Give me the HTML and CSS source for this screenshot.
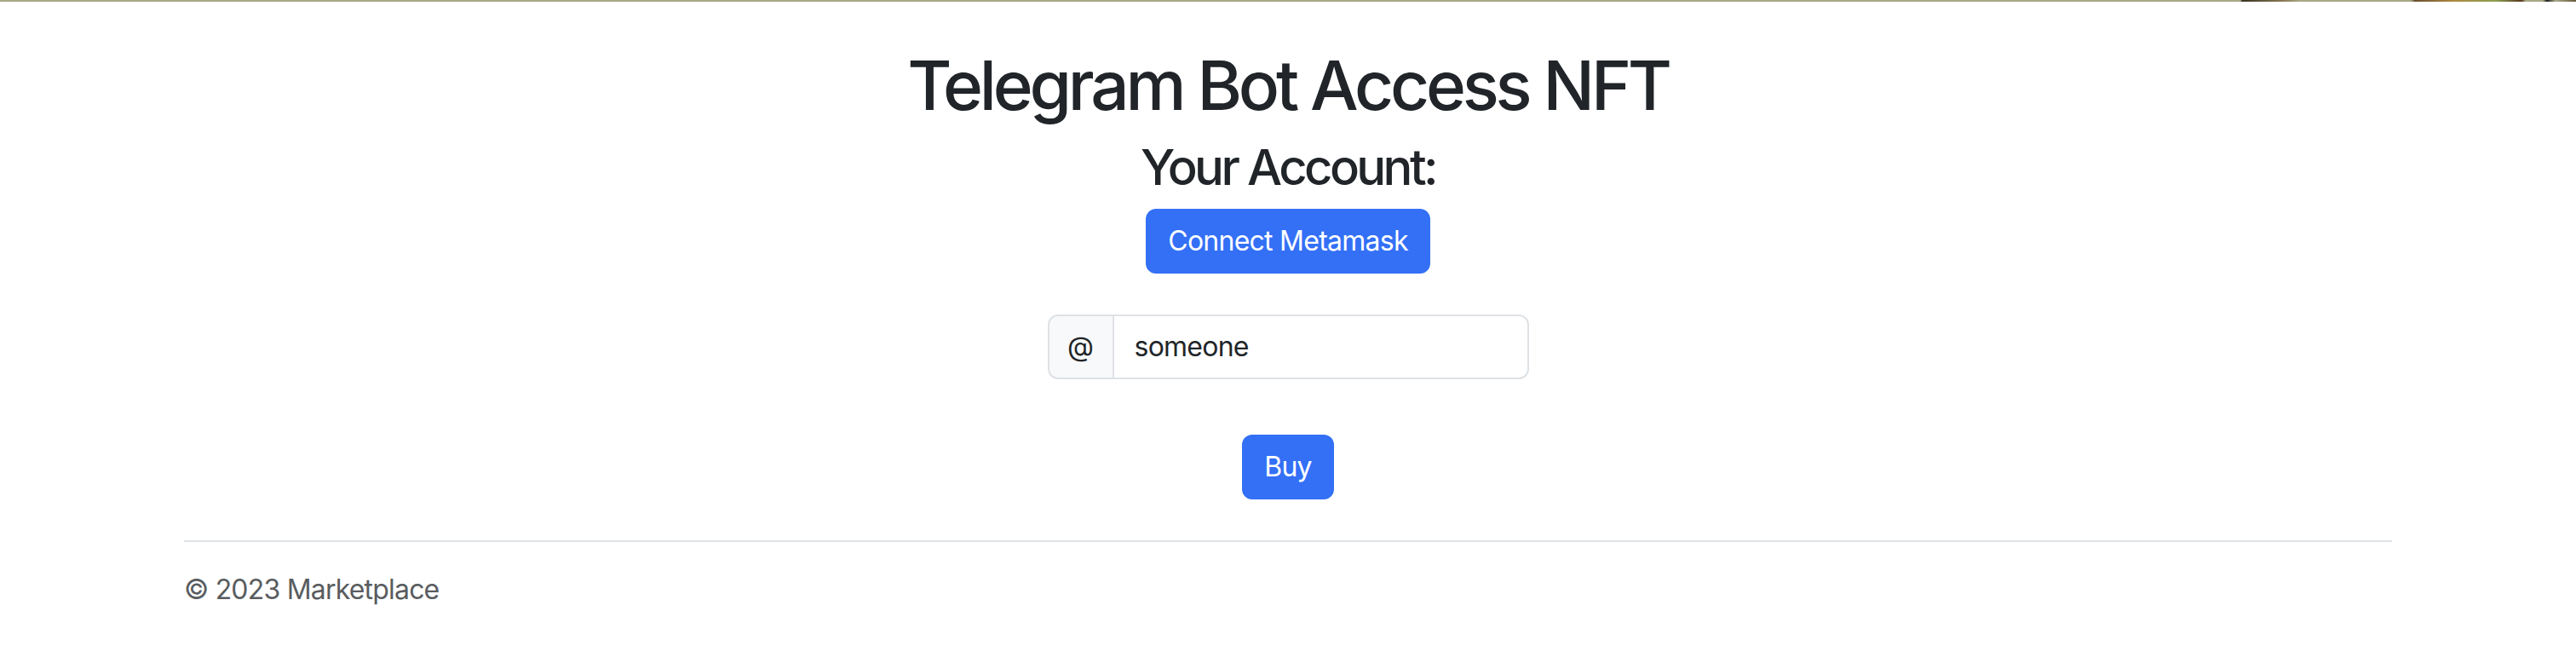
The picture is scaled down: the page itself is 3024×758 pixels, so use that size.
FILE: index.html
```html
<!DOCTYPE html>
<html lang="en">
<head>
<meta charset="utf-8">
<title>Telegram Bot Access NFT</title>
<link rel="stylesheet" href="styles.css">
</head>
<body>
<div class="topbar"></div>
<div class="container">
  <main class="main">
    <h1 class="title">Telegram Bot Access NFT</h1>
    <h3 class="account">Your Account:</h3>
    <button class="btn" type="button">Connect Metamask</button>
    <div class="input-group">
      <span class="addon">@</span>
      <input class="field" type="text" value="someone">
    </div>
    <button class="btn btn-buy" type="button">Buy</button>
  </main>
  <footer class="footer">
    <hr class="rule">
    <p class="copy">© 2023 Marketplace</p>
  </footer>
</div>
</body>
</html>
```
FILE: styles.css
```css
* { box-sizing: border-box; }
body {
  margin: 0;
  font-family: Inter, "Liberation Sans", sans-serif;
  color: #212529;
  background: #fff;
}
.topbar {
  height: 2px;
  background: linear-gradient(90deg, #a8a886 0, #a8a886 2630px, #3a3424 2632px, #8a7a55 2680px, #a8a886 2700px, #a8a886 2830px, #6a5030 2835px, #b08840 2880px, #8aa050 2930px, #5a3a20 2960px, #a8a886 2965px, #a8a886 2985px, #202020 2990px, #a8a886 3000px, #6a5a40 3024px);
}
.container {
  width: 2592px;
  margin: 0 auto;
}
.main {
  display: flex;
  flex-direction: column;
  align-items: center;
}
.title {
  margin: 50px 0 13px;
  font-size: 80px;
  line-height: 96px;
  font-weight: 500;
  letter-spacing: -4.2px;
}
.account {
  margin: 0 0 14px;
  font-size: 58px;
  line-height: 70px;
  font-weight: 500;
  letter-spacing: -3.6px;
}
.btn {
  font-family: inherit;
  font-size: 32px;
  line-height: 48px;
  padding: 12px 24px;
  border: 2px solid #3370f6;
  border-radius: 12px;
  background: #3370f6;
  color: #fff;
  letter-spacing: -0.75px;
}
.input-group {
  display: flex;
  width: 565px;
  margin-top: 48px;
}
.addon {
  width: 78px;
  display: flex;
  align-items: center;
  justify-content: center;
  font-size: 32px;
  line-height: 48px;
  padding: 12px 0;
  background: #f8f9fa;
  border: 2px solid #dee2e6;
  border-radius: 12px 0 0 12px;
}
.field {
  flex: 1;
  min-width: 0;
  font-family: inherit;
  font-size: 32px;
  line-height: 48px;
  padding: 12px 24px;
  color: #212529;
  border: 2px solid #dee2e6;
  border-left: 0;
  border-radius: 0 12px 12px 0;
  outline: none;
  letter-spacing: -0.75px;
}
.btn-buy {
  margin-top: 65px;
}
.footer {
  padding-top: 48px;
}
.rule {
  margin: 0;
  border: 0;
  border-top: 2px solid #dee2e6;
}
.copy {
  margin: 32px 0 0;
  font-size: 32px;
  line-height: 48px;
  color: #595c5f;
  letter-spacing: -0.8px;
}
```
